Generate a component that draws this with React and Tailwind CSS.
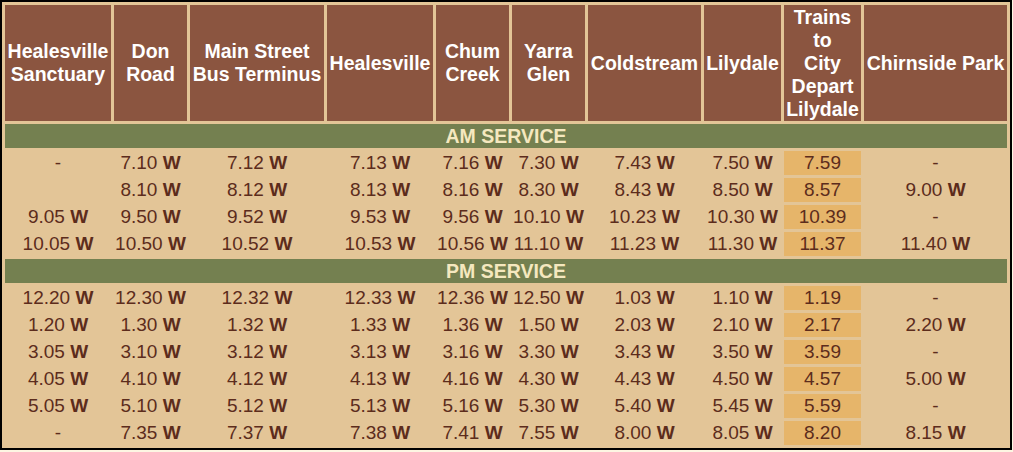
const HEADERS = [
  ['Healesville', 'Sanctuary'],
  ['Don', 'Road'],
  ['Main Street', 'Bus Terminus'],
  ['Healesville'],
  ['Chum', 'Creek'],
  ['Yarra', 'Glen'],
  ['Coldstream'],
  ['Lilydale'],
  ['Trains', 'to', 'City', 'Depart', 'Lilydale'],
  ['Chirnside Park'],
];

const WIDTHS = ['w-[106px]', 'w-[73px]', 'w-[134px]', 'w-[106px]', 'w-[73px]', 'w-[73px]', 'w-[113px]', 'w-[77px]', 'w-[77px]', 'w-[143px]'];

const AM = [
  ['-', '7.10', '7.12', '7.13', '7.16', '7.30', '7.43', '7.50', '7.59', '-'],
  ['', '8.10', '8.12', '8.13', '8.16', '8.30', '8.43', '8.50', '8.57', '9.00'],
  ['9.05', '9.50', '9.52', '9.53', '9.56', '10.10', '10.23', '10.30', '10.39', '-'],
  ['10.05', '10.50', '10.52', '10.53', '10.56', '11.10', '11.23', '11.30', '11.37', '11.40'],
];

const PM = [
  ['12.20', '12.30', '12.32', '12.33', '12.36', '12.50', '1.03', '1.10', '1.19', '-'],
  ['1.20', '1.30', '1.32', '1.33', '1.36', '1.50', '2.03', '2.10', '2.17', '2.20'],
  ['3.05', '3.10', '3.12', '3.13', '3.16', '3.30', '3.43', '3.50', '3.59', '-'],
  ['4.05', '4.10', '4.12', '4.13', '4.16', '4.30', '4.43', '4.50', '4.57', '5.00'],
  ['5.05', '5.10', '5.12', '5.13', '5.16', '5.30', '5.40', '5.45', '5.59', '-'],
  ['-', '7.35', '7.37', '7.38', '7.41', '7.55', '8.00', '8.05', '8.20', '8.15'],
];

function Cell({ value, col }) {
  // column 9 is the train departure, no "W" and highlighted
  if (col === 8) {
    return <td className="h-[24px] p-0 leading-[24px] bg-[#e6b56a]">{value}</td>;
  }
  return (
    <td className="h-[24px] p-0 leading-[24px]">
      {value === '-' || value === '' ? value : (
        <>
          {value} <b className="font-bold">W</b>
        </>
      )}
    </td>
  );
}

function Section({ title }) {
  return (
    <tr>
      <td colSpan={10} className="h-[24px] p-0 leading-[24px] bg-[#748050] text-[#f5e8bf] font-bold text-[19.5px]">
        {title}
      </td>
    </tr>
  );
}

export default function App() {
  return (
    <div className="min-h-screen bg-[#fdf6e3]" style={{ fontFamily: '"Liberation Sans", Arial, sans-serif' }}>
      <table className="table-fixed border-separate border-spacing-[3px] border-2 border-black bg-[#e3c597] w-[1012px] text-center text-[19px] text-[#5c2c1c]">
        <colgroup>
          {WIDTHS.map((w, i) => <col key={i} className={w} />)}
        </colgroup>
        <thead>
          <tr>
            {HEADERS.map((lines, i) => (
              <th key={i} className="h-[116px] p-0 bg-[#8b5540] text-white font-bold text-[19.5px] leading-[23px] align-middle whitespace-nowrap">
                {lines.map((l, j) => (
                  <div key={j}>{l}</div>
                ))}
              </th>
            ))}
          </tr>
        </thead>
        <tbody>
          <Section title="AM SERVICE" />
          {AM.map((row, r) => (
            <tr key={'am' + r}>
              {row.map((v, c) => <Cell key={c} value={v} col={c} />)}
            </tr>
          ))}
          <Section title="PM SERVICE" />
          {PM.map((row, r) => (
            <tr key={'pm' + r}>
              {row.map((v, c) => <Cell key={c} value={v} col={c} />)}
            </tr>
          ))}
        </tbody>
      </table>
    </div>
  );
}
